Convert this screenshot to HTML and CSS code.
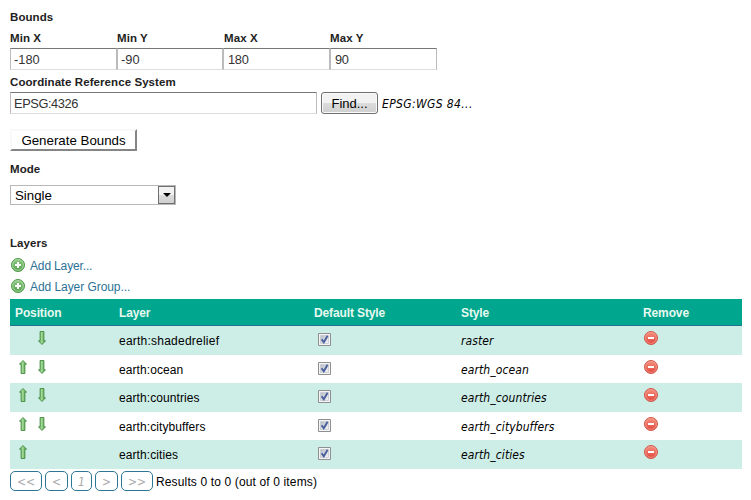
FILE: index.html
```html
<!DOCTYPE html>
<html lang="en">
<head>
<meta charset="utf-8">
<title>Layer group</title>
<link rel="stylesheet" href="styles.css">
</head>
<body>
<svg class="defs" width="0" height="0" aria-hidden="true">
  <defs>
    <linearGradient id="gArrow" x1="0" x2="1" y1="0" y2="0"><stop offset="0" stop-color="#4c9a48"/><stop offset=".45" stop-color="#a5dc98"/><stop offset="1" stop-color="#3c8839"/></linearGradient>
    <linearGradient id="gAdd" x1="0" x2="0" y1="0" y2="1"><stop offset="0" stop-color="#8fc987"/><stop offset="1" stop-color="#4fa047"/></linearGradient>
    <linearGradient id="gDel" x1="0" x2="0" y1="0" y2="1"><stop offset="0" stop-color="#f59482"/><stop offset="1" stop-color="#e2433a"/></linearGradient>
    <linearGradient id="gBox" x1="0" x2="1" y1="0" y2="1"><stop offset="0" stop-color="#b4bbc4"/><stop offset="1" stop-color="#f6f6f6"/></linearGradient>
    <symbol id="up" viewBox="0 0 8 14"><path d="M4 .5 7.5 4.2H5.9V13.5H2.1V4.2H.5Z" fill="url(#gArrow)" stroke="#428b3f" stroke-width=".9"/></symbol>
    <symbol id="down" viewBox="0 0 8 14"><path d="M4 13.5 7.5 9.8H5.9V.5H2.1V9.8H.5Z" fill="url(#gArrow)" stroke="#428b3f" stroke-width=".9"/></symbol>
    <symbol id="add" viewBox="0 0 14 14"><circle cx="7" cy="7" r="6.5" fill="url(#gAdd)" stroke="#4f9b48"/><circle cx="7" cy="7" r="5.3" fill="none" stroke="#b9deb3" stroke-width=".8"/><path d="M7 4v6M4 7h6" stroke="#fff" stroke-width="2"/></symbol>
    <symbol id="del" viewBox="0 0 14 14"><circle cx="7" cy="7" r="6.5" fill="url(#gDel)" stroke="#d0584c"/><circle cx="7" cy="7" r="5.4" fill="none" stroke="#f3a093" stroke-width=".7"/><path d="M4 7h6" stroke="#fff" stroke-width="2"/></symbol>
    <symbol id="check" viewBox="0 0 13 13"><path d="M.5 .5h12v12H.5Z" fill="#f4f4f4" stroke="#8e8f8f"/><path d="M2.5 2.5h8v8h-8Z" fill="url(#gBox)" stroke="#c5cad0" stroke-width=".8"/><path d="M3.6 6.2 5.8 9.3 9.6 2.8" fill="none" stroke="#4a5f9e" stroke-width="1.9"/></symbol>
  </defs>
</svg>
<main class="form">
  <h3 class="label title"><span>Bounds</span></h3>
  <div class="bounds">
    <div><div class="label"><span>Min X</span></div><div class="field">-180</div></div>
    <div><div class="label"><span>Min Y</span></div><div class="field">-90</div></div>
    <div><div class="label inset"><span>Max X</span></div><div class="field inset-field">180</div></div>
    <div><div class="label"><span>Max Y</span></div><div class="field inset-field">90</div></div>
  </div>
  <div class="label crs-label"><span>Coordinate Reference System</span></div>
  <div class="crs">
    <div class="field crs-field">EPSG:4326</div>
    <button class="find">Find...</button>
    <em class="crs-name">EPSG:WGS 84...</em>
  </div>
  <button class="generate">Generate Bounds</button>
  <div class="label mode"><span>Mode</span></div>
  <div class="select"><span>Single</span><i class="drop"></i></div>
  <h3 class="label layers"><span>Layers</span></h3>
  <a class="add"><svg width="14" height="14"><use href="#add"/></svg><span class="add-one">Add Layer...</span></a>
  <a class="add"><svg width="14" height="14"><use href="#add"/></svg><span class="add-group">Add Layer Group...</span></a>
  <div class="table">
    <div class="row head"><span>Position</span><span>Layer</span><span>Default Style</span><span>Style</span><span>Remove</span></div>
    <div class="row odd"><span class="pos"><i></i><svg width="8" height="14"><use href="#down"/></svg></span><span class="name loose">earth:shadedrelief</span><span class="check"><svg width="13" height="13"><use href="#check"/></svg></span><em>raster</em><span class="remove"><svg width="14" height="14"><use href="#del"/></svg></span></div>
    <div class="row"><span class="pos"><svg width="8" height="14"><use href="#up"/></svg><svg width="8" height="14"><use href="#down"/></svg></span><span class="name">earth:ocean</span><span class="check"><svg width="13" height="13"><use href="#check"/></svg></span><em>earth_ocean</em><span class="remove"><svg width="14" height="14"><use href="#del"/></svg></span></div>
    <div class="row odd"><span class="pos"><svg width="8" height="14"><use href="#up"/></svg><svg width="8" height="14"><use href="#down"/></svg></span><span class="name">earth:countries</span><span class="check"><svg width="13" height="13"><use href="#check"/></svg></span><em>earth_countries</em><span class="remove"><svg width="14" height="14"><use href="#del"/></svg></span></div>
    <div class="row"><span class="pos"><svg width="8" height="14"><use href="#up"/></svg><svg width="8" height="14"><use href="#down"/></svg></span><span class="name">earth:citybuffers</span><span class="check"><svg width="13" height="13"><use href="#check"/></svg></span><em>earth_citybuffers</em><span class="remove"><svg width="14" height="14"><use href="#del"/></svg></span></div>
    <div class="row odd"><span class="pos"><svg width="8" height="14"><use href="#up"/></svg></span><span class="name">earth:cities</span><span class="check"><svg width="13" height="13"><use href="#check"/></svg></span><em>earth_cities</em><span class="remove"><svg width="14" height="14"><use href="#del"/></svg></span></div>
  </div>
  <div class="pager">
    <em class="wide">&lt;&lt;</em><em>&lt;</em><em class="num">1</em><em>&gt;</em><em class="wide">&gt;&gt;</em>
    <span>Results 0 to 0 (out of 0 items)</span>
  </div>
</main>
</body>
</html>
```
FILE: styles.css
```css
* { box-sizing: border-box; }
body {
  margin: 0;
  background: #fff;
  color: #000;
  font: 12px/14px "Liberation Sans", Arial, sans-serif;
  white-space: nowrap;
}
svg { display: block; }
.defs { position: absolute; }
.form { padding: 10px 9px 0 10px; height: 500px; overflow: hidden; }

.label { margin: 0; height: 14px; font-size: 11.5px; font-weight: bold; line-height: 14px; color: #222; letter-spacing: .08px; }
.title { margin-bottom: 7px; }
.bounds { display: grid; grid-template-columns: 107px 106px 107px 107px; }
.bounds .label { margin-bottom: 3px; }
.bounds .inset { padding-left: 1px; }
.field {
  height: 22px;
  padding: 0 3px;
  border: 1px solid #bbb;
  border-top-color: #777;
  border-bottom-color: #ddd;
  background: #fff;
  color: #333;
  font-size: 12.8px;
  line-height: 21px;
}
.inset-field { padding-left: 4px; letter-spacing: -.3px; }
.crs-label { margin: 5px 0 3px; }
.crs { display: flex; height: 22px; }
.crs-field { width: 307px; margin-right: 4px; letter-spacing: -.4px; }
.find {
  width: 57px;
  height: 22px;
  padding: 1px 0 0;
  border: 1px solid #707070;
  border-radius: 3px;
  background: linear-gradient(#f2f2f2 50%, #dcdcdc 50%, #cfcfcf);
  box-shadow: inset 0 0 0 1px #fafafa;
  font: 13px/20px "Liberation Sans", Arial, sans-serif;
}
em { font-family: "DejaVu Sans Condensed", "DejaVu Sans", sans-serif; font-stretch: condensed; font-style: italic; }
.crs-name { margin-left: 4px; font-size: 12px; line-height: 24px; letter-spacing: .37px; }
.generate {
  display: block;
  width: 127px;
  height: 22px;
  margin-top: 15px;
  padding: 1px 0 0;
  border: 2px solid;
  border-color: #f9f9f9 #858585 #858585 #f9f9f9;
  background: #fff;
  font: 13.3px/18px "Liberation Sans", Arial, sans-serif;
}
.mode { margin: 11px 0 9px; }
.select {
  display: flex;
  justify-content: space-between;
  width: 166px;
  height: 20px;
  padding: 0 0 0 4px;
  border: 1px solid #b8b8b8;
  font-size: 13.3px;
  line-height: 19px;
}
.drop {
  display: flex;
  align-items: center;
  justify-content: center;
  width: 17px;
  height: 18px;
  border: 1px solid #707070;
  background: linear-gradient(#f2f2f2 50%, #dcdcdc 50%, #cfcfcf);
}
.drop::before { content: ""; border: 4px solid transparent; border-top-color: #000; border-bottom: 0; }
.layers { margin: 31px 0 5px; }
.add { display: flex; align-items: center; height: 21px; padding: 1px 0 0 1px; gap: 5px; color: #2d7296; }
.add svg { margin-bottom: 2px; }
.add-one { letter-spacing: -.15px; }
.add-group { letter-spacing: -.06px; }
.table { margin-top: 2px; }
.row { display: grid; grid-template-columns: 104px 195px 147px 182px 1fr; height: 28px; padding-left: 5px; line-height: 30px; }
.row.odd { height: 29px; background: #cdede7; }
.row.head { height: 27px; border-bottom: 1px solid #1f7490; background: #00a78e; color: #e9f8f0; font-weight: bold; line-height: 29px; letter-spacing: -.12px; }
.pos { display: flex; gap: 11px; padding: 5px 0 0 4px; }
.pos i { width: 8px; }
.name { letter-spacing: .08px; }
.loose { letter-spacing: .23px; }
.check { padding: 7px 0 0 4px; }
.row em { font-size: 12px; letter-spacing: .1px; }
.remove { padding: 5px 0 0 1px; }
.pager { display: flex; gap: 3px; height: 20px; margin-top: 2px; }
.pager em {
  width: 23px;
  height: 20px;
  border: 1px solid #2d7794;
  border-radius: 5px;
  color: #aaa;
  font-size: 12px;
  line-height: 20px;
  text-align: center;
}
.pager .wide { width: 32px; }
.pager .num { width: 21px; }
.pager span { line-height: 22px; letter-spacing: .14px; }
```
